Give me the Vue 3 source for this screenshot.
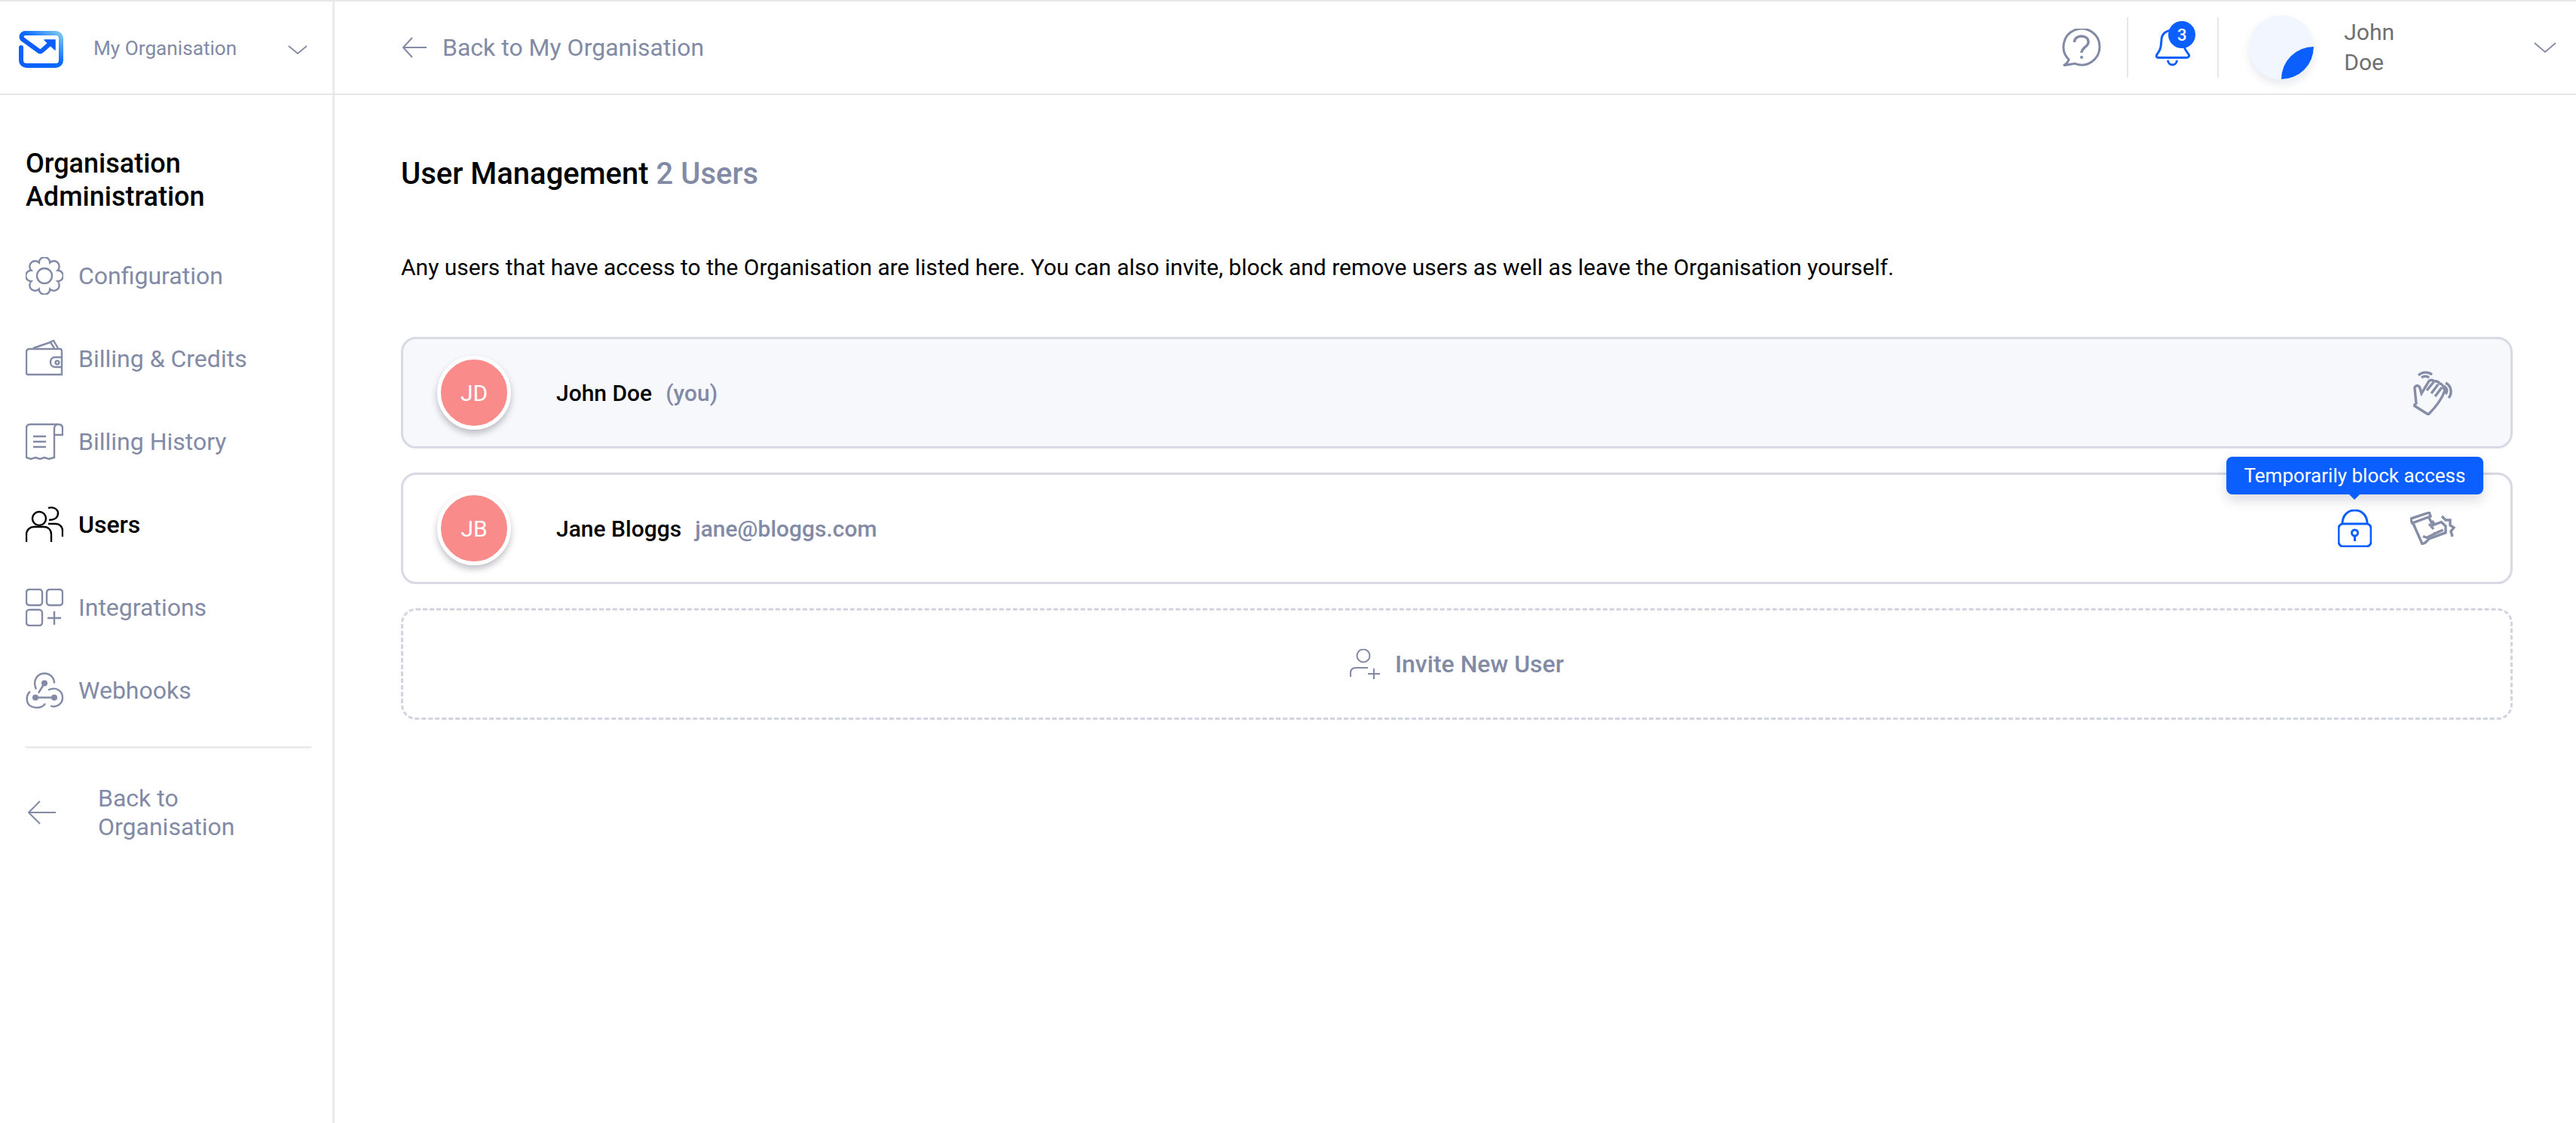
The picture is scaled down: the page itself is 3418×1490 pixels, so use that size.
<script setup>
const R = 19, bump = 5.6
let d = ''
for (let k = 0; k < 8; k++) {
  const a = (k * 45 - 22.5) * Math.PI / 180
  const x = (25 + R * Math.cos(a)).toFixed(2), y = (25 + R * Math.sin(a)).toFixed(2)
  d += (k === 0 ? 'M' : `A${bump} ${bump} 0 0 1 `) + x + ' ' + y
}
d += `A${bump} ${bump} 0 0 1 ` + (25 + R * Math.cos(-22.5 * Math.PI / 180)).toFixed(2) + ' ' + (25 + R * Math.sin(-22.5 * Math.PI / 180)).toFixed(2) + 'Z'
const gearPath = d
</script>

<template>
  <div class="app">
    <header class="top">
      <div class="brand">
        <svg class="logo" viewBox="0 0 60 50" fill="none">
          <defs>
            <linearGradient id="lg" x1="0" y1="1" x2="1" y2="0">
              <stop offset="0" stop-color="#0b5fff" />
              <stop offset="0.55" stop-color="#0b6bff" />
              <stop offset="1" stop-color="#7cc7f0" />
            </linearGradient>
          </defs>
          <path d="M4 23V40a7 7 0 0 0 7 7H50a7 7 0 0 0 7-7V11a7 7 0 0 0-7-7H10C5 4 3 9 6 12" stroke="url(#lg)" stroke-width="6" stroke-linecap="round" />
          <path d="M6 12L28 28Q30 29 32 27L41 19" stroke="#0b5fff" stroke-width="6" stroke-linecap="round" stroke-linejoin="round" />
          <path d="M35 13H49V26Z" fill="#0b5fff" stroke="#0b5fff" stroke-width="1.5" stroke-linejoin="round" />
        </svg>
        <span class="org">My Organisation</span>
        <svg class="chev" viewBox="0 0 26 12" fill="none"><path d="M1 1L13 11L25 1" /></svg>
      </div>
      <div class="bar">
        <div class="crumb">
          <svg class="arrow-top" viewBox="0 0 34 28" fill="none"><path d="M33 14H2M14 1L2 14L14 27" /></svg>
          <span>Back to My Organisation</span>
        </div>
        <div class="tools">
          <svg class="help" viewBox="0 0 53 50" fill="none">
            <path d="M9 41A24 24 0 1 1 17 46.3L2 49C6 47 8 44 9 41Z" />
            <path class="q" d="M16.5 18C16.5 13 20 10 26 10C31 10 35 13 35 18C35 24 26 25 26 32" />
            <circle cx="26" cy="38" r="2" fill="#828aa5" stroke="none" />
          </svg>
          <i class="sep sep-a"></i>
          <div class="bell-wrap">
            <svg class="bell" viewBox="0 0 46 50" fill="none">
              <path d="M24 2C14 2 8 7 8 15L7 24C6 30 3 32 1.5 35C0.5 37 2 38.5 4 38.5H41C44 38.5 45.5 36.5 44 34C42 31 39 28 38 24" />
              <path d="M16.5 42C17 50 28 50 28.5 42" />
            </svg>
            <span class="badge">3</span>
          </div>
          <i class="sep sep-b"></i>
          <svg class="me" viewBox="0 0 86 86">
            <circle cx="43" cy="43" r="43" fill="#f2f6fe" />
            <path d="M86 42A43 43 0 0 1 43 85A43 43 0 0 1 86 42Z" fill="#0b5fff" />
          </svg>
          <div class="me-name">John<br />Doe</div>
          <svg class="chev chev-me" viewBox="0 0 30 14" fill="none"><path d="M1 1L15 13L29 1" /></svg>
        </div>
      </div>
    </header>

    <div class="body">
      <aside class="side">
        <h2 class="side-title">Organisation<br />Administration</h2>
        <nav class="nav">
          <a class="item">
            <svg class="ico" viewBox="0 0 50 50" fill="none">
              <path :d="gearPath" />
              <circle cx="25" cy="25" r="10" />
            </svg>
            Configuration
          </a>
          <a class="item">
            <svg class="ico" viewBox="0 0 50 50" fill="none">
              <path d="M1 16C1 13 3 12 5 12H46C48 12 48 14 48 16V46H4C2 46 1 45 1 43Z" />
              <path d="M10 11L33 3L38 11M32 3L37 1L43 11" />
              <path d="M49 23H39C31 23 31 36 39 36H49" />
              <circle cx="42" cy="30" r="2.4" />
            </svg>
            Billing &amp; Credits
          </a>
          <a class="item">
            <svg class="ico" viewBox="0 0 50 50" fill="none">
              <path d="M42 2H6C3 2 1 4 1 7V46L7 48L13 46L19 48L25 46L31 48L38 46V8C38 4 40 2 43 2C47 2 49 4 49 7V16H38" />
              <path d="M10 18H27M10 25H27M10 32H27" />
            </svg>
            Billing History
          </a>
          <a class="item active">
            <svg class="ico" viewBox="0 0 50 50" fill="none">
              <circle cx="18" cy="17" r="9" />
              <path d="M30 3C36 1 43 4 43 10C43 16 38 19 31 19" />
              <path d="M1 48V38C1 32 6 28 11 28H24C30 28 34 32 34 38V48" />
              <path d="M30 24H40C45 24 49 28 49 33V41" />
            </svg>
            Users
          </a>
          <a class="item">
            <svg class="ico" viewBox="0 0 50 50" fill="none">
              <rect x="1" y="1" width="21" height="21" rx="4" />
              <rect x="28" y="1" width="21" height="21" rx="4" />
              <rect x="1" y="28" width="21" height="21" rx="4" />
              <path d="M38 30V48M29 39H47" />
            </svg>
            Integrations
          </a>
          <a class="item">
            <svg class="ico" viewBox="0 0 50 47" fill="none">
              <path d="M25 14L17 27M14 22C9 11 15 1 25 1C33 1 38 7 38 14" />
              <path d="M13 33H38M30 23C40 18 49 24 49 33C49 42 40 47 33 44" />
              <path d="M6 25C0 30 0 42 8 45C16 48 23 46 26 41" />
              <circle cx="25" cy="14" r="4" fill="#828aa5" stroke="none" />
              <circle cx="13" cy="33" r="4" fill="#828aa5" stroke="none" />
              <circle cx="38" cy="33" r="4" fill="#828aa5" stroke="none" />
            </svg>
            Webhooks
          </a>
        </nav>
        <div class="side-rule"></div>
        <a class="side-back">
          <svg class="arrow-side" viewBox="0 0 38 32" fill="none"><path d="M38 16H2M17 1L2 16L17 31" /></svg>
          <span>Back to<br />Organisation</span>
        </a>
      </aside>

      <main class="main">
        <h1 class="title">User Management <span>2 Users</span></h1>
        <p class="intro">Any users that have access to the Organisation are listed here. You can also invite, block and remove users as well as leave the Organisation yourself.</p>

        <div class="row self">
          <div class="avatar">JD</div>
          <div class="who"><b>John Doe</b><span>(you)</span></div>
          <div class="actions">
            <svg class="action hand" viewBox="12 11 52 60" fill="none">
              <path d="M13 58L16 55L14 36C13 31 20 30 21 35L23 42L32 27C34 23 38 24 40 26C43 25 46 27 47 29C50 29 52 32 52 34L54 38C50 50 42 60 32 70Z" />
              <path d="M30 38L39 27M36 42L45 30M41 46L50 34" />
              <path d="M19 18C24 13 32 13 37 17M23 21C26 19 30 19 33 21M55 28C63 32 64 42 59 48M53 32C57 35 58 39 55 43" />
            </svg>
          </div>
        </div>

        <div class="row">
          <div class="avatar">JB</div>
          <div class="who"><b>Jane Bloggs</b><span>jane@bloggs.com</span></div>
          <div class="actions">
            <div class="lock-wrap">
              <div class="tip">Temporarily block access</div>
              <svg class="lock" viewBox="0 0 45 50" fill="none">
                <path d="M6 19C6 8 13 1 22.5 1S39 8 39 19" />
                <rect x="1" y="19" width="43" height="30" rx="6" />
                <circle cx="22.5" cy="31" r="4" />
                <path d="M22.5 35V42" />
              </svg>
            </div>
            <svg class="action boot" viewBox="8 9 60 44" fill="none">
              <path d="M8.3 18.3L33.3 10L35 15L10.7 24ZM11.7 24L24 51.7L28 50L33 45L55 36.7V28L49.3 22.7L38.3 26.7L31.7 15" />
              <path d="M25 41.7L30 43.3L51.7 33M33 25L39 32M37 21L41 27M40 36L41 39M45 34L46 37" />
              <path d="M50 15L55 20H61V27L66 30L62 35L64 42" />
            </svg>
          </div>
        </div>

        <div class="invite">
          <svg class="invite-ico" viewBox="0 0 40 40" fill="none">
            <circle cx="18" cy="9" r="8.5" />
            <path d="M1 37V32C1 27 4 25 8 25H24" />
            <path d="M32 26V40M24 33H40" />
          </svg>
          Invite New User
        </div>
      </main>
    </div>
  </div>
</template>

<style scoped>
.app {
  min-height: 1490px;
  box-sizing: border-box;
  border-top: 2px solid #e7e7ea;
  font-family: Roboto, "Liberation Sans", sans-serif;
  color: #000;
  background: #fff;
  display: flex;
  flex-direction: column;
}
.top {
  display: flex;
  height: 124px;
  box-sizing: border-box;
  border-bottom: 2px solid #e7e7ea;
}
.brand {
  width: 444px;
  box-sizing: border-box;
  border-right: 3px solid #ebebee;
  display: flex;
  align-items: center;
  padding-left: 24px;
}
.logo { width: 60px; height: 50px; margin-top: 3px; }
.org { margin-left: 40px; margin-top: 2px; font-size: 26.2px; color: #828aa5; }
.chev { stroke: #828aa5; stroke-width: 1.8; }
.brand .chev { width: 26px; height: 12px; margin-left: auto; margin-right: 33px; margin-top: 6px; }
.bar {
  flex: 1;
  display: flex;
  align-items: center;
  justify-content: space-between;
  padding-left: 89px;
  padding-right: 26px;
}
.crumb { display: flex; align-items: center; font-size: 32px; color: #828aa5; }
.arrow-top { width: 34px; height: 28px; margin-right: 20px; stroke: #828aa5; stroke-width: 2; }
.tools { display: flex; align-items: center; }
.help { width: 53px; height: 50px; stroke: #828aa5; stroke-width: 3; }
.q { stroke-width: 3.4; }
.sep { width: 2px; height: 80px; background: #e7e7ea; }
.sep-a { margin: 0 36px 0 33px; }
.sep-b { margin: 0 40px 0 36px; }
.bell-wrap { position: relative; width: 46px; height: 50px; }
.bell { width: 46px; height: 50px; stroke: #0b5fff; stroke-width: 3; }
.badge {
  position: absolute;
  left: 17px;
  top: -10px;
  width: 36px;
  height: 36px;
  border-radius: 50%;
  background: #0b5fff;
  color: #fff;
  font-size: 22px;
  font-weight: 500;
  display: flex;
  align-items: center;
  justify-content: center;
}
.me { width: 86px; height: 86px; border-radius: 50%; filter: drop-shadow(0 6px 6px rgba(60, 70, 110, 0.12)); }
.me-name { margin-left: 40px; font-size: 30px; line-height: 40px; color: #6f6f6f; }
.chev-me { width: 30px; height: 14px; margin-left: 185px; }

.body { flex: 1; display: flex; }
.side {
  width: 444px;
  box-sizing: border-box;
  border-right: 3px solid #ebebee;
  padding: 69px 28px 0 34px;
}
.side-title { margin: 0; font-size: 36px; line-height: 44px; font-weight: 500; }
.nav { margin-top: 28px; }
.item {
  height: 110px;
  display: flex;
  align-items: center;
  gap: 20px;
  font-size: 32px;
  color: #828aa5;
}
.item.active { color: #000; font-weight: 500; }
.ico { width: 50px; height: 50px; flex: none; stroke: #828aa5; stroke-width: 2.4; }
.active .ico { stroke: #000; }
.side-rule { height: 3px; background: #ebebee; margin-top: 19px; }
.side-back {
  display: flex;
  align-items: center;
  margin-top: 47px;
  font-size: 32px;
  line-height: 38px;
  color: #828aa5;
}
.arrow-side { width: 38px; height: 32px; margin-left: 2px; margin-right: 56px; stroke: #828aa5; stroke-width: 2; flex: none; }

.main { flex: 1; padding: 80px 84px 0 88px; }
.title { margin: 0; font-size: 40px; line-height: 50px; font-weight: 500; }
.title span { color: #828aa5; }
.intro { margin: 77px 0 0; font-size: 30px; line-height: 44px; }

.row {
  position: relative;
  height: 148px;
  box-sizing: border-box;
  margin-top: 32px;
  border: 3px solid #d8d9e5;
  border-radius: 20px;
  display: flex;
  align-items: center;
  padding-left: 45px;
}
.row.self { background: #f7f8fc; margin-top: 70px; }
.avatar {
  width: 98px;
  height: 98px;
  box-sizing: border-box;
  border: 5px solid #fff;
  border-radius: 50%;
  background: #f98b8b;
  color: #fff;
  font-size: 30px;
  display: flex;
  align-items: center;
  justify-content: center;
  box-shadow: 0 5px 8px rgba(50, 50, 70, 0.3);
  flex: none;
}
.who { margin-left: 60px; font-size: 30px; display: flex; align-items: baseline; gap: 18px; }
.who b { font-weight: 500; }
.who span { color: #828aa5; font-weight: 500; }
.actions { margin-left: auto; display: flex; align-items: center; gap: 51px; padding-right: 73px; }
.action { flex: none; stroke: #868da6; stroke-width: 3.4; }
.hand { width: 52px; height: 60px; margin-right: 4px; }
.boot { width: 60px; height: 44px; }
.lock-wrap { position: relative; width: 45px; height: 50px; }
.lock { width: 45px; height: 50px; stroke: #0b5fff; stroke-width: 3; display: block; }
.tip {
  position: absolute;
  bottom: 70px;
  left: 50%;
  transform: translateX(-50%);
  white-space: nowrap;
  background: #0b5fff;
  color: #fff;
  font-size: 26px;
  line-height: 50px;
  padding: 0 24px;
  border-radius: 8px;
  box-shadow: 0 8px 16px rgba(40, 40, 60, 0.16);
}
.tip::after {
  content: "";
  position: absolute;
  left: 50%;
  bottom: -7px;
  margin-left: -8px;
  border: 8px solid transparent;
  border-bottom: 0;
  border-top-color: #0b5fff;
}
.invite {
  height: 148px;
  box-sizing: border-box;
  margin-top: 32px;
  border: 3px dashed #d3d4e2;
  border-radius: 20px;
  display: flex;
  align-items: center;
  justify-content: center;
  gap: 20px;
  font-size: 32px;
  font-weight: 500;
  color: #828aa5;
}
.invite-ico { width: 40px; height: 40px; stroke: #828aa5; stroke-width: 2; }
</style>
